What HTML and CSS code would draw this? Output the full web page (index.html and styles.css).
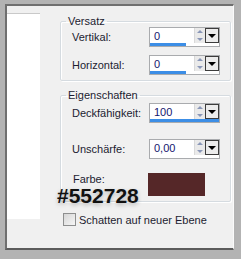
FILE: index.html
```html
<!DOCTYPE html>
<html>
  <head>
    <link rel="stylesheet" href="styles.css">
  </head>
  <body>
    <div class="window">
      <div class="sidebar"></div>

      <div class="main">
        <fieldset class="group group-offset">
          <legend>Versatz</legend>
          <div class="row">
            <span class="label">Vertikal:</span>
            <div class="spin">
              <div class="spin-top">
                <span class="value">0</span>
                <span class="arrows"><i class="up"></i><i class="down"></i></span>
                <span class="drop"></span>
              </div>
              <div class="bar"><div class="fill" style="width: 36px"></div></div>
            </div>
          </div>
          <div class="row row-second">
            <span class="label">Horizontal:</span>
            <div class="spin">
              <div class="spin-top">
                <span class="value">0</span>
                <span class="arrows"><i class="up"></i><i class="down"></i></span>
                <span class="drop"></span>
              </div>
              <div class="bar"><div class="fill" style="width: 36px"></div></div>
            </div>
          </div>
        </fieldset>

        <fieldset class="group group-props">
          <legend>Eigenschaften</legend>
          <div class="row row-opacity">
            <span class="label">Deckfähigkeit:</span>
            <div class="spin">
              <div class="spin-top">
                <span class="value">100</span>
                <span class="arrows"><i class="up"></i><i class="down"></i></span>
                <span class="drop"></span>
              </div>
              <div class="bar"><div class="fill" style="width: 69px"></div></div>
            </div>
          </div>
          <div class="row row-blur">
            <span class="label">Unschärfe:</span>
            <div class="spin">
              <div class="spin-top">
                <span class="value">0,00</span>
                <span class="arrows"><i class="up"></i><i class="down"></i></span>
                <span class="drop"></span>
              </div>
              <div class="bar"><div class="fill" style="width: 0px"></div></div>
            </div>
          </div>
          <div class="row row-color">
            <span class="label label-color">Farbe:</span>
            <div class="swatch"></div>
          </div>
        </fieldset>

        <label class="check">
          <span class="check-box"></span>
          Schatten auf neuer Ebene
        </label>
      </div>

      <div class="hex">#552728</div>
    </div>
  </body>
</html>
```

FILE: styles.css
```css
body {
  margin: 0;
  background: #b3b3b3;
  font-family: "Liberation Sans", Arial, sans-serif;
  font-size: 11px;
  color: #1c1c30;
}
.window {
  position: relative;
  display: flex;
  width: 226px;
  height: 242px;
  margin: 4px 0 0 5px;
  border-top: 2px solid #6f6f6f;
  border-left: 2px solid #6f6f6f;
  border-right: 1px solid #fafafa;
  border-bottom: 2px solid #5c5c5c;
  background: #f0f0f0;
}
.sidebar {
  width: 33px;
  height: 205px;
  margin-top: 7px;
  border-top: 1px solid #c9c9c9;
  background: #fff;
}
.main {
  width: 171px;
  margin-left: 20px;
}
.group {
  margin: 0;
  padding: 0 10px 5px 0;
  border: 1px solid #d5dbe0;
  border-radius: 2px;
  box-shadow: inset 1px 1px 0 #fff, 1px 1px 0 #fff;
}
.group legend {
  margin-left: 5px;
  padding: 0 2px;
  line-height: 11px;
  font-size: 11px;
}
.group-offset {
  margin-top: 10px;
}
.group-props {
  margin-top: 9px;
  padding-bottom: 5px;
}
.row {
  display: flex;
  align-items: center;
  justify-content: space-between;
}
.row-second {
  margin-top: 8px;
}
.row-opacity {
  margin-top: 2px;
}
.row-blur {
  margin-top: 16px;
}
.row-color {
  margin-top: 14px;
  align-items: flex-start;
}
.label {
  padding-left: 11px;
}
.label-color {
  padding: 1px 0 0 12px;
  line-height: 11px;
}
.spin {
  width: 69px;
  border: 1px solid #a9abae;
  background: #fff;
}
.spin-top {
  display: flex;
  height: 15px;
}
.value {
  flex: 1;
  padding: 2px 0 0 4px;
  line-height: 12px;
  color: #14146e;
}
.arrows {
  display: flex;
  flex-direction: column;
  justify-content: space-around;
  align-items: center;
  width: 10px;
  background: #eaeaea;
  border-left: 1px solid #d9d9d9;
}
.up {
  border-left: 3px solid transparent;
  border-right: 3px solid transparent;
  border-bottom: 3px solid #8a97b8;
}
.down {
  border-left: 3px solid transparent;
  border-right: 3px solid transparent;
  border-top: 3px solid #8a97b8;
}
.drop {
  display: flex;
  align-items: center;
  justify-content: center;
  width: 12px;
  border: 1px solid #3c3c3c;
  background: #ececec;
}
.drop::after {
  content: "";
  border-left: 4px solid transparent;
  border-right: 4px solid transparent;
  border-top: 4px solid #000;
}
.bar {
  height: 3px;
  background: #fff;
}
.fill {
  height: 3px;
  background: #3c8ee6;
}
.swatch {
  width: 57px;
  height: 23px;
  background: #552728;
  margin-right: 15px;
}
.check {
  display: flex;
  align-items: center;
  gap: 3px;
  margin: 11px 0 0 3px;
}
.check-box {
  width: 11px;
  height: 11px;
  border: 1px solid #8e8f8f;
  background: linear-gradient(135deg, #d6d6d6, #f6f6f6);
}
.hex {
  position: absolute;
  left: 50px;
  top: 183px;
  font-size: 21px;
  line-height: 14px;
  font-weight: bold;
  color: #111;
  text-shadow: 0 2px 4px rgba(0, 0, 0, 0.25);
}
```
